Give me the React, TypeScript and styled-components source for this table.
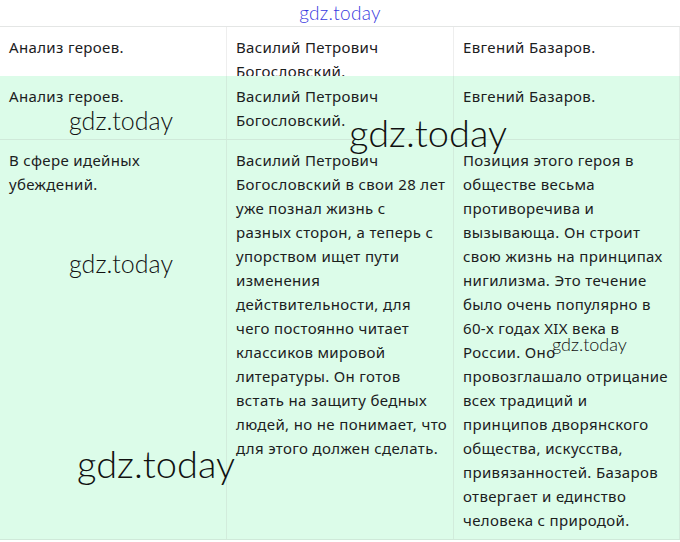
import React from "react";
import styled, { createGlobalStyle } from "styled-components";

const Global = createGlobalStyle`
  html, body { margin: 0; padding: 0; background: #ffffff; overflow: hidden; }
  * { box-sizing: border-box; }
`;

const Page = styled.div`
  position: relative;
  width: 680px;
  height: 542px;
  overflow: hidden;
  font-family: "Noto Sans", "Liberation Sans", sans-serif;
  color: #1b201d;
`;

const TopBar = styled.div`
  height: 26px;
  display: flex;
  justify-content: center;
  align-items: center;
  background: #ffffff;
`;

const Brand = styled.span`
  font-family: Lato, "Noto Sans", sans-serif;
  font-weight: 300;
  font-size: 19px;
  color: #3a3ae0;
  letter-spacing: 0.3px;
  margin-top: -2px;
`;

const Table = styled.div`
  border-top: 1px solid #e4e6e5;
  background: #dcfce9;
`;

const Row = styled.div<{ $head?: boolean; $height?: number }>`
  display: grid;
  grid-template-columns: 227px 227px 1fr;
  background: ${(p) => (p.$head ? "#ffffff" : "#dcfce9")};
  border-bottom: ${(p) => (p.$head ? "none" : "1px solid #cfe9d9")};
  height: ${(p) => (p.$height ? `${p.$height}px` : "auto")};
  overflow: hidden;
`;

const Cell = styled.div<{ $head?: boolean }>`
  display: flex;
  flex-direction: column;
  padding: 8px 8px 7px 9px;
  font-size: 15px;
  line-height: 24px;
  letter-spacing: 0.35px;
  white-space: nowrap;
  border-right: 1px solid ${(p) => (p.$head ? "#eeeeee" : "#d2ecdc")};
`;

const Line = styled.span`
  display: block;
`;

const Mark = styled.span<{ $size: number; $x: number; $y: number }>`
  position: absolute;
  left: ${(p) => p.$x}px;
  top: ${(p) => p.$y}px;
  font-family: Lato, "Noto Sans", sans-serif;
  font-weight: 300;
  font-size: ${(p) => p.$size}px;
  line-height: 1;
  color: #111111;
  pointer-events: none;
  white-space: nowrap;
`;

const head: string[][] = [
  ["Анализ героев."],
  ["Василий Петрович", "Богословский."],
  ["Евгений Базаров."],
];

const rows: string[][][] = [
  head,
  [
    ["В сфере идейных", "убеждений."],
    [
      "Василий Петрович",
      "Богословский в свои 28 лет",
      "уже познал жизнь с",
      "разных сторон, а теперь с",
      "упорством ищет пути",
      "изменения",
      "действительности, для",
      "чего постоянно читает",
      "классиков мировой",
      "литературы. Он готов",
      "встать на защиту бедных",
      "людей, но не понимает, что",
      "для этого должен сделать.",
    ],
    [
      "Позиция этого героя в",
      "обществе весьма",
      "противоречива и",
      "вызывающа. Он строит",
      "свою жизнь на принципах",
      "нигилизма. Это течение",
      "было очень популярно в",
      "60-х годах XIX века в",
      "России. Оно",
      "провозглашало отрицание",
      "всех традиций и",
      "принципов дворянского",
      "общества, искусства,",
      "привязанностей. Базаров",
      "отвергает и единство",
      "человека с природой.",
    ],
  ],
];

const renderCell = (lines: string[]) => lines.map((l, i) => <Line key={i}>{l}</Line>);

export default function App() {
  return (
    <Page>
      <Global />
      <TopBar>
        <Brand>gdz.today</Brand>
      </TopBar>
      <Table>
        <Row $head $height={49}>
          {head.map((c, i) => (
            <Cell $head key={i}>{renderCell(c)}</Cell>
          ))}
        </Row>
        {rows.map((r, ri) => (
          <Row key={ri}>
            {r.map((c, i) => (
              <Cell key={i}>{renderCell(c)}</Cell>
            ))}
          </Row>
        ))}
      </Table>
      <Mark $size={25} $x={69} $y={108}>gdz.today</Mark>
      <Mark $size={38} $x={349} $y={113}>gdz.today</Mark>
      <Mark $size={25} $x={69} $y={251}>gdz.today</Mark>
      <Mark $size={38} $x={77} $y={444}>gdz.today</Mark>
      <Mark $size={18} $x={552} $y={335}>gdz.today</Mark>
    </Page>
  );
}
